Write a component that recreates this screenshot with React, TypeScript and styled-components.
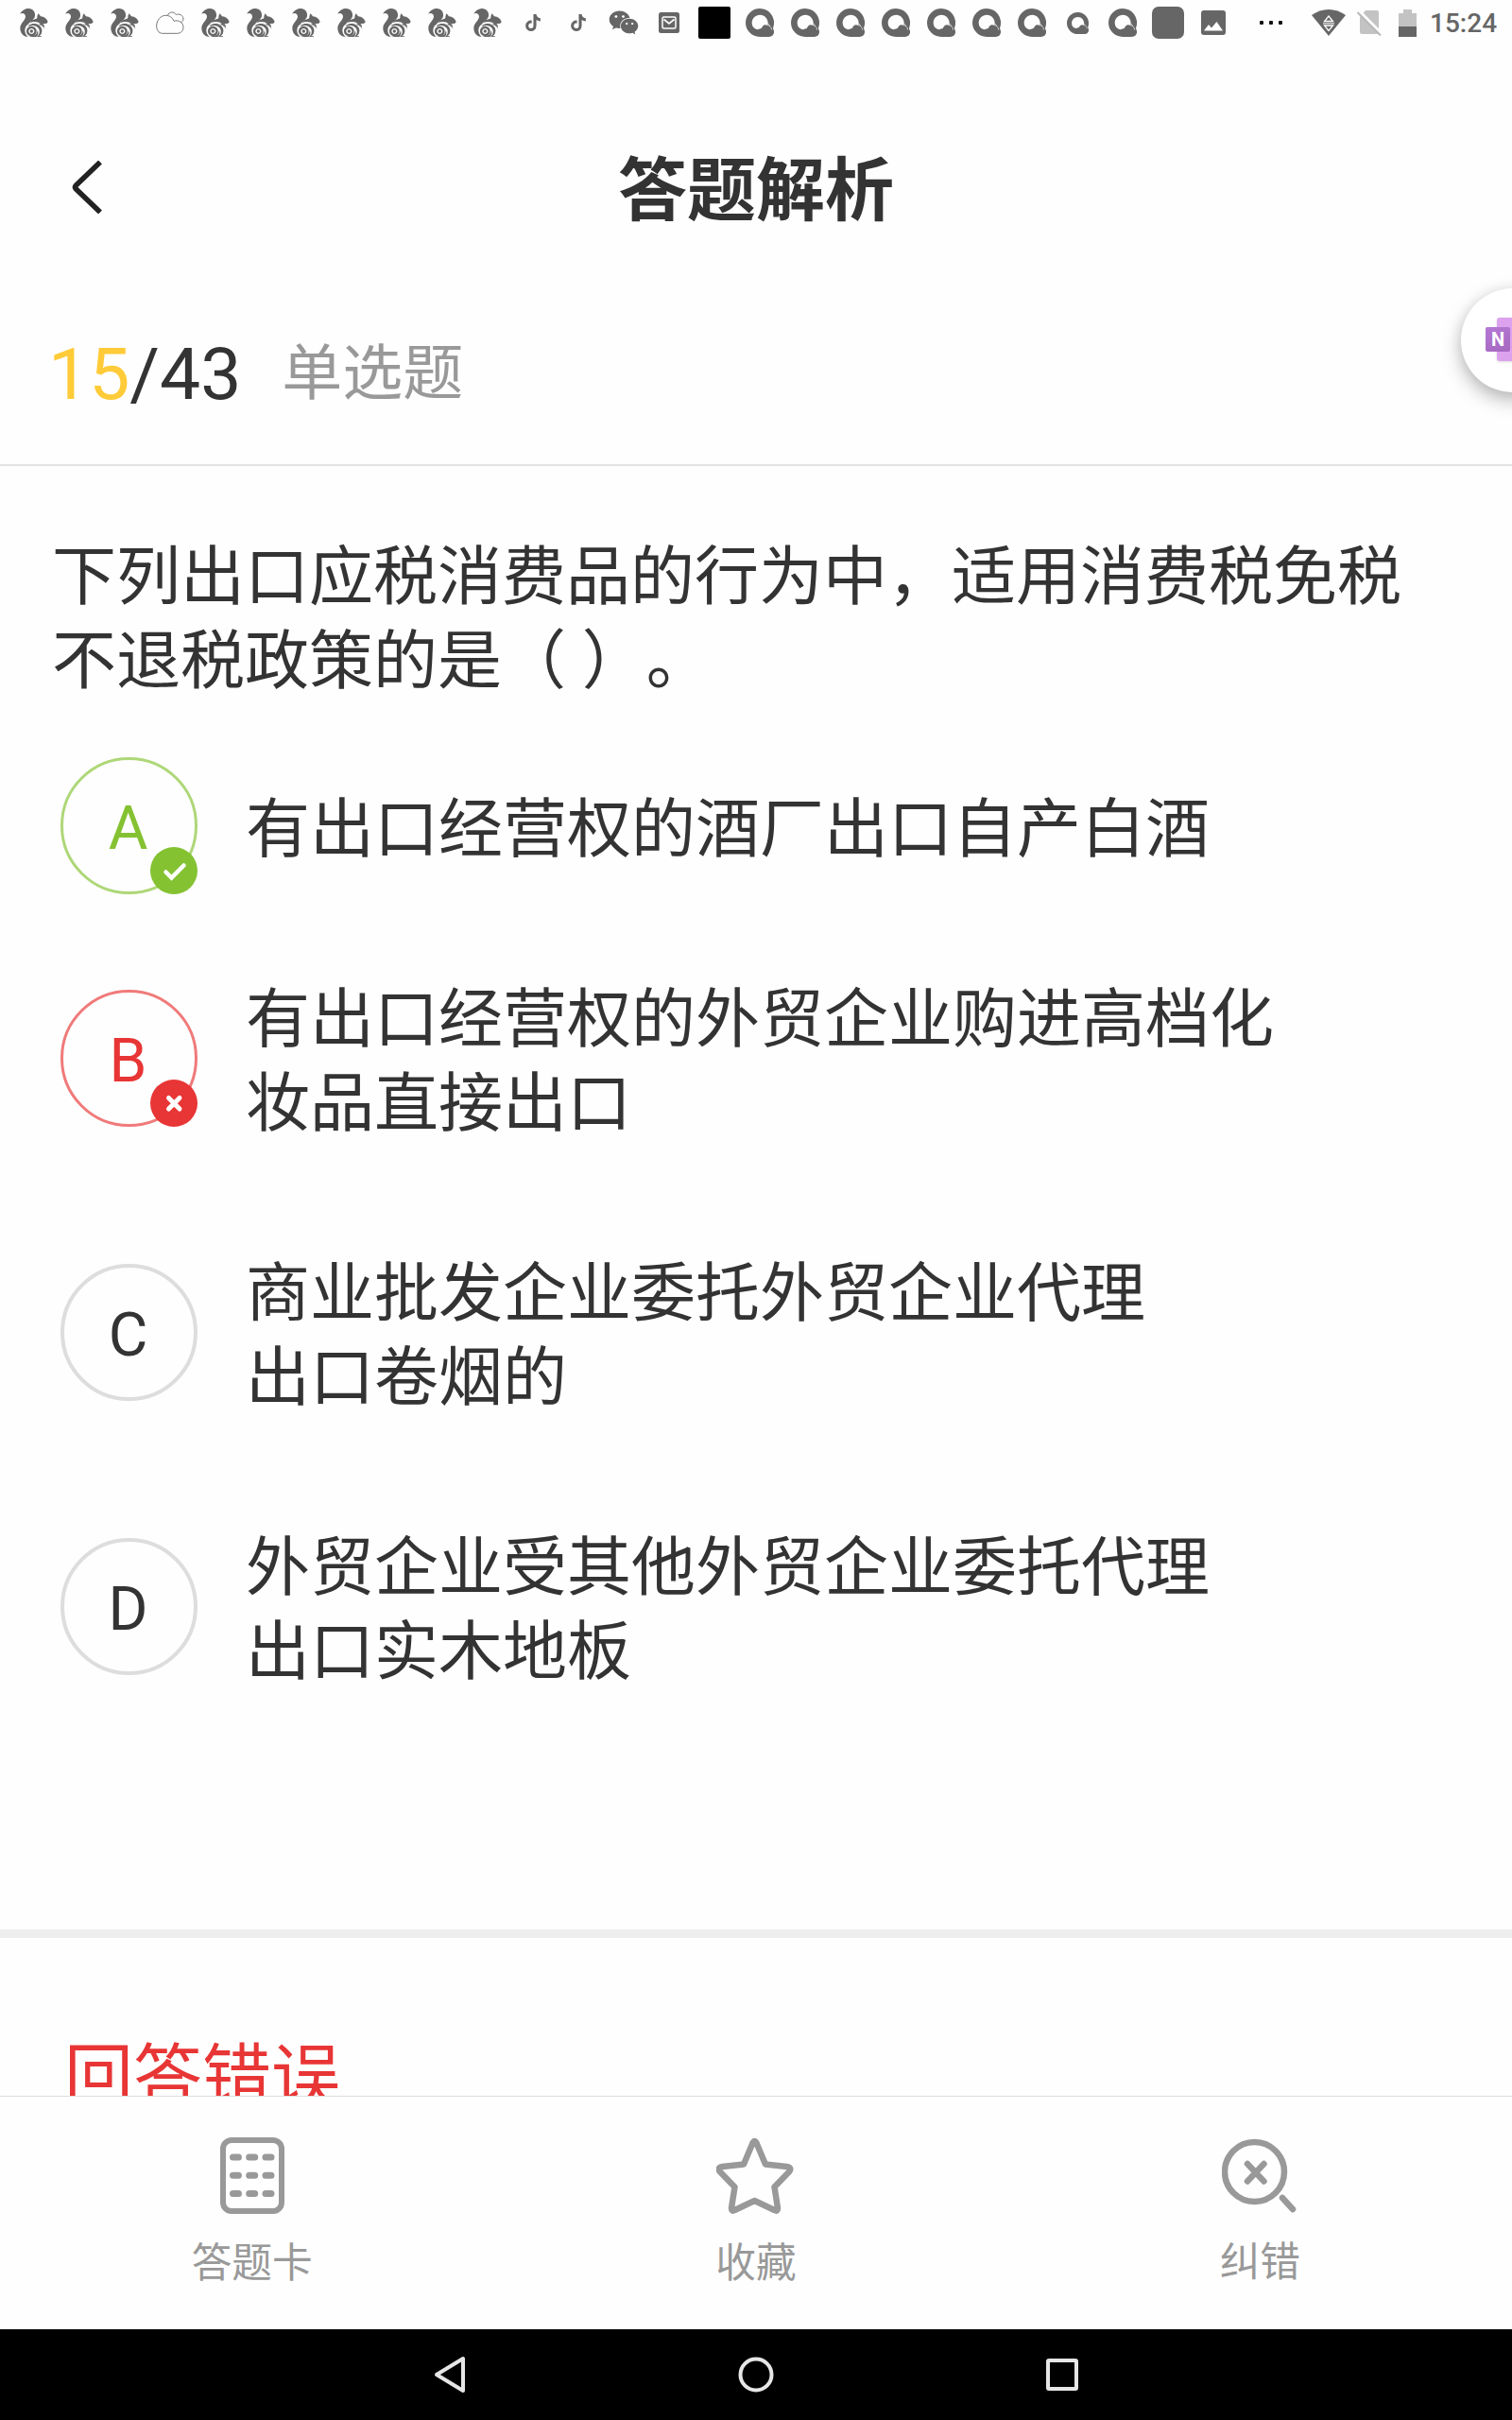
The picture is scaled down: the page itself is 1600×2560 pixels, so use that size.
import React from "react";
import styled, { createGlobalStyle } from "styled-components";
import { FaTiktok, FaWeixin } from "react-icons/fa";

const Global = createGlobalStyle`
  html, body { margin: 0; padding: 0; background: #fefefe; }
  * { box-sizing: border-box; }
`;

const Screen = styled.div`
  position: relative;
  display: flex;
  flex-direction: column;
  width: 1600px;
  height: 2560px;
  overflow: hidden;
  background: #fefefe;
  color: #333;
  font-family: Roboto, "Noto Sans CJK SC", sans-serif;
  text-spacing-trim: space-all;
`;

const StatusBar = styled.div`
  display: flex;
  align-items: center;
  flex: 0 0 48px;
  padding-left: 12px;
  color: #666;
`;

const Slot = styled.div`
  display: flex;
  align-items: center;
  justify-content: center;
  flex: 0 0 48px;
  height: 48px;
  svg { display: block; }
`;

const Tile = styled.div<{ $color: string; $radius: number }>`
  width: 34px;
  height: 34px;
  background: ${(p) => p.$color};
  border-radius: ${(p) => p.$radius}px;
`;

const Dots = styled.div`
  display: flex;
  gap: 6px;
  margin-left: 25px;
  span { width: 4px; height: 4px; border-radius: 1px; background: #111; }
`;

const SystemIcons = styled.div`
  display: flex;
  align-items: center;
  margin-left: 31px;
  svg { display: block; }
`;

const Clock = styled.span`
  margin-left: 14px;
  padding-top: 2px;
  font-size: 28px;
  font-weight: 500;
  line-height: 46px;
`;

const Header = styled.header`
  display: grid;
  grid-template-columns: 160px 1fr 160px;
  align-items: center;
  flex: 0 0 252px;
  padding-top: 48px;
`;

const BackButton = styled.button`
  border: 0;
  padding: 0 0 0 76px;
  background: none;
  svg { display: block; }
`;

const Title = styled.h1`
  margin: 0;
  padding-top: 7px;
  text-align: center;
  font-size: 73px;
  line-height: 90px;
  font-weight: 700;
`;

const Progress = styled.div`
  display: flex;
  flex: 0 0 193px;
  padding: 51px 0 0 51px;
  border-bottom: 2px solid #e3e3e3;
  font-size: 76.8px;
  line-height: 90px;
`;

const Current = styled.span`
  color: #ffcb38;
`;

const Kind = styled.span`
  margin-left: 43px;
  font-size: 64px;
  color: #999;
`;

const Content = styled.main`
  flex: 1;
  min-height: 0;
  overflow: hidden;
  display: flex;
  flex-direction: column;
`;

const Question = styled.p`
  margin: 74px 56px 28px 55px;
  font-size: 68px;
  line-height: 89px;
`;

const Options = styled.div`
  display: flex;
  flex-direction: column;
  padding-left: 64px;
`;

const OptionRow = styled.div`
  display: flex;
  align-items: center;
  gap: 51px;
`;

const tones = { right: "#84c232", wrong: "#e83535", idle: "#333" };
type Tone = keyof typeof tones;

const Letter = styled.div<{ $tone: Tone }>`
  position: relative;
  flex: 0 0 145px;
  height: 145px;
  border-radius: 50%;
  border: ${(p) => (p.$tone === "idle" ? "4px solid #ddd" : "3px solid " + tones[p.$tone] + "a8")};
  display: flex;
  align-items: center;
  justify-content: center;
  padding: 6px 2px 0 0;
  font-size: 64px;
  line-height: 75px;
  color: ${(p) => tones[p.$tone]};
`;

const Badge = styled.svg`
  position: absolute;
  right: -3px;
  bottom: -3px;
`;

const OptionText = styled.div`
  padding: 61px 0 51px;
  font-size: 68px;
  line-height: 89px;
  white-space: pre-line;
`;

const Divider = styled.div`
  flex: 0 0 9px;
  margin-top: 197px;
  background: #eee;
`;

const Verdict = styled.div`
  margin: 102px 0 0 68px;
  font-size: 73px;
  line-height: 90px;
  white-space: nowrap;
  color: #e83535;
`;

const TabBar = styled.nav`
  display: flex;
  flex: 0 0 247px;
  border-top: 1px solid #ddd;
`;

const Tab = styled.div<{ $gap?: number }>`
  flex: 1;
  display: flex;
  flex-direction: column;
  align-items: center;
  padding-top: 40px;
  color: #999;
  font-size: 42.67px;
  line-height: 60px;
  svg { display: block; margin-bottom: ${(p) => p.$gap ?? 22}px; }
`;

const NavBar = styled.div`
  display: flex;
  justify-content: center;
  align-items: center;
  gap: 284px;
  flex: 0 0 96px;
  background: #000;
`;

const Bubble = styled.div`
  position: absolute;
  left: 1546px;
  top: 305px;
  width: 110px;
  height: 110px;
  border-radius: 50%;
  background: #fff;
  box-shadow: 0 8px 20px rgba(0, 0, 0, 0.28), 0 0 14px rgba(0, 0, 0, 0.06);
`;

const Notebook = styled.div`
  position: absolute;
  left: 38px;
  top: 31px;
  width: 40px;
  height: 46px;
  border-radius: 3px;
  background: #dda2ee;
  box-shadow: 0 1px 3px rgba(0, 0, 0, 0.15);
`;

const NotebookTag = styled.div`
  position: absolute;
  left: -12px;
  top: 10px;
  width: 26px;
  height: 26px;
  border-radius: 2px;
  background: linear-gradient(160deg, #b579d5, #a568c0);
  color: #fff;
  font-size: 20px;
  font-weight: 700;
  line-height: 26px;
  text-align: center;
`;

const Squirrel = () => (
  <svg width="30" height="30" viewBox="0 0 90 90" fill="#666">
    <path d="M1 17C6 6 18 0 28 0C42 1 50 12 48 24C46 36 31 41 28 49C21 53 16 60 16 70C16 79 20 85 26 89H20C8 85 1 75 1 62C1 46 17 38 18 26C18 16 8 13 1 17Z" />
    <path d="M59 16L66 25C77 26 86 33 89 42C87 48 80 49 73 48C77 51 78 54 77 59C69 45 53 38 31 45C36 34 50 36 55 30C55 25 56 20 59 16Z" />
    <path d="M28 53C47 42 67 51 70 67C71 77 68 84 61 88H69V90H54C60 85 64 79 62 70C60 57 43 50 28 57Z" />
    <path d="M62 45C73 50 78 57 79 66C76 59 70 54 62 51Z" />
    <path fillRule="evenodd" d="M37 56A16 16 0 1 1 36.900 56ZM37 63A9 9 0 1 0 37.100 63Z" />
    <circle cx="37" cy="72" r="5" />
    <path d="M50 83C54 79 56 74 56 69C60 77 59 85 52 90H28Z" />
  </svg>
);

const CloudOutline = () => (
  <svg width="30" height="26" viewBox="0 0 90 78" fill="none" stroke="#777" strokeWidth="3">
    <path d="M20 73C8 72 2 62 2 48C3 31 14 17 30 16C44 16 53 23 57 34C72 29 86 38 87 53C87 65 80 72 68 73Z" />
    <path d="M37 16C42 4 57 2 64 14C73 9 87 15 87 27C87 33 84 36 79 37" />
  </svg>
);

const QIcon = ({ size = 30 }: { size?: number }) => (
  <svg width={size} height={size} viewBox="0 0 90 90">
    <path
      fill="#666"
      fillRule="evenodd"
      d="M45 0A45 45 0 0 1 88 59Q86 62 89 68C93 80 86 90 74 90H45A45 45 0 0 1 45 0ZM46 20C31 20 20 31 20 46C20 57 26 64 37 67C43 65 46 64 51 62C54 52 62 49 70 54C75 38 63 20 46 20Z"
    />
    <path d="M70 53C77 54 82 59 83 68M72 48L77 56" fill="none" stroke="#ddd" strokeWidth="2.500" />
  </svg>
);

const MailIcon = () => (
  <svg width="22" height="22" viewBox="0 0 22 22">
    <rect width="22" height="22" rx="2.500" fill="#666" />
    <rect x="4" y="5" width="14" height="12" rx="1.500" fill="none" stroke="#fff" strokeWidth="1.500" />
    <path d="M5.500 7.500L11 12L16.500 7.500" fill="none" stroke="#fff" strokeWidth="1.700" />
  </svg>
);

const PhotoIcon = () => (
  <svg width="26" height="26" viewBox="0 0 26 26">
    <rect width="26" height="26" rx="3" fill="#666" />
    <path d="M3 21.500L8 15L11 18.500L16.500 12L23 21.500Z" fill="#fff" />
  </svg>
);

const WifiIcon = () => (
  <svg width="36" height="28" viewBox="0 0 36 28">
    <path d="M0 6C11-2 25-2 36 6L18 28Z" fill="#666" />
    <path d="M18 7L22.500 12.500H13.500ZM18 22.500L13.500 17H22.500Z" fill="none" stroke="#fff" strokeWidth="1.300" />
    <path d="M12 14.800H24" stroke="#fff" strokeWidth="1" />
  </svg>
);

const NoSimIcon = styled(({ className }: { className?: string }) => (
  <svg className={className} width="26" height="28" viewBox="0 0 26 28">
    <path d="M9 1H21Q23 1 23 3V24Q23 26 21 26H5Q3 26 3 24V8Z" fill="#c3c3c3" />
    <path d="M1 1L26 26" stroke="#fefefe" strokeWidth="4" />
    <path d="M.500 3L25 27.500" stroke="#b8b8b8" strokeWidth="2" />
  </svg>
))`
  margin-left: 12px;
`;

const BatteryIcon = styled(({ className }: { className?: string }) => (
  <svg className={className} width="19" height="29" viewBox="0 0 19 29">
    <path d="M0 4H5V0H14V4H19V19H0Z" fill="#c3c3c3" />
    <path d="M0 18H19V29H0Z" fill="#666" />
  </svg>
))`
  margin-left: 18px;
`;

const CardIcon = () => (
  <svg width="68" height="84" viewBox="0 0 68 84" fill="none" stroke="#999">
    <rect x="3" y="6" width="62" height="75" rx="9" strokeWidth="6" />
    {[24, 43.3, 62.6].map((y) => (
      <path key={y} d={`M13.500 ${y}h6M30.700 ${y}h6M48 ${y}h6`} strokeWidth="7" strokeLinecap="round" />
    ))}
  </svg>
);

const StarIcon = () => (
  <svg width="84" height="84" viewBox="1.500 0 84 84" fill="none" stroke="#999" strokeWidth="6.500" strokeLinejoin="round">
    <path d="M40 9Q42 5 44 9L53.500 31.500L76 34Q82 35 78.500 39.500L63 55.500L66.500 78Q66.500 82 63 80L42 70L21 80Q17.500 82 17.500 78L21 55.500L5.500 39.500Q2 35 8 34L30.500 31.500Z" />
  </svg>
);

const ReportIcon = () => (
  <svg width="80" height="84" viewBox="0 0 80 84" fill="none" stroke="#999" strokeWidth="6.500" strokeLinecap="round">
    <circle cx="34.500" cy="39.500" r="31.500" />
    <path d="M27 31L44.500 49.500M44.500 31L27 49.500M64 67L75 79" />
  </svg>
);

type Status = "squirrel" | "cloud" | "note" | "wechat" | "mail" | "black" | "q" | "smallq" | "grey" | "photo";

const statusItems: Status[] = [
  "squirrel", "squirrel", "squirrel", "cloud",
  "squirrel", "squirrel", "squirrel", "squirrel", "squirrel", "squirrel", "squirrel",
  "note", "note", "wechat", "mail", "black",
  "q", "q", "q", "q", "q", "q", "q", "smallq", "q", "grey", "photo",
];

const statusArt: Record<Status, React.ReactNode> = {
  squirrel: <Squirrel />,
  cloud: <CloudOutline />,
  note: <FaTiktok size={18} />,
  wechat: <FaWeixin size={32} />,
  mail: <MailIcon />,
  black: <Tile $color="#000" $radius={2} />,
  q: <QIcon />,
  smallq: <QIcon size={23} />,
  grey: <Tile $color="#666" $radius={7} />,
  photo: <PhotoIcon />,
};

const options: { letter: string; tone: Tone; text: string }[] = [
  { letter: "A", tone: "right", text: "有出口经营权的酒厂出口自产白酒" },
  { letter: "B", tone: "wrong", text: "有出口经营权的外贸企业购进高档化\n妆品直接出口" },
  { letter: "C", tone: "idle", text: "商业批发企业委托外贸企业代理\n出口卷烟的" },
  { letter: "D", tone: "idle", text: "外贸企业受其他外贸企业委托代理\n出口实木地板" },
];

export default function App() {
  return (
    <Screen>
      <Global />
      <StatusBar>
        {statusItems.map((name, i) => (
          <Slot key={i}>{statusArt[name]}</Slot>
        ))}
        <Dots><span /><span /><span /></Dots>
        <SystemIcons>
          <WifiIcon />
          <NoSimIcon />
          <BatteryIcon />
        </SystemIcons>
        <Clock>15:24</Clock>
      </StatusBar>

      <Header>
        <BackButton aria-label="返回">
          <svg width="32" height="56" viewBox="0 0 32 56" fill="none" stroke="#222" strokeWidth="5.500">
            <path d="M30 1.500L4.500 26Q2.500 28 4.500 30L30 54.500" />
          </svg>
        </BackButton>
        <Title>答题解析</Title>
      </Header>

      <Progress>
        <Current>15</Current>/43
        <Kind>单选题</Kind>
      </Progress>

      <Content>
        <Question>
          下列出口应税消费品的行为中，适用消费税免税
          <br />
          不退税政策的是（ ）。
        </Question>
        <Options>
          {options.map((o) => (
            <OptionRow key={o.letter}>
              <Letter $tone={o.tone}>
                {o.letter}
                {o.tone !== "idle" && (
                  <Badge width="50" height="50" viewBox="0 0 50 50" fill="none" stroke="#fff">
                    <circle cx="25" cy="25" r="25" fill={tones[o.tone]} stroke="none" />
                    {o.tone === "right" ? (
                      <path d="M16.500 26.500L22.500 32.500L35.500 19.500" strokeWidth="4.500" strokeLinecap="round" />
                    ) : (
                      <path d="M19.500 19.500L31 31M31 19.500L19.500 31" strokeWidth="5" strokeLinecap="round" />
                    )}
                  </Badge>
                )}
              </Letter>
              <OptionText>{o.text}</OptionText>
            </OptionRow>
          ))}
        </Options>
        <Divider />
        <Verdict>回答错误</Verdict>
      </Content>

      <TabBar>
        <Tab><CardIcon />答题卡</Tab>
        <Tab><StarIcon />收藏</Tab>
        <Tab $gap={21}><ReportIcon />纠错</Tab>
      </TabBar>

      <NavBar>
        <svg width="40" height="40" viewBox="0 0 40 40" fill="none" stroke="#e6e6e6" strokeWidth="4" strokeLinejoin="round">
          <path d="M34 3V37L6 20Z" />
        </svg>
        <svg width="40" height="40" viewBox="0 0 40 40" fill="none" stroke="#e6e6e6" strokeWidth="4">
          <circle cx="20" cy="20" r="16.500" />
        </svg>
        <svg width="40" height="40" viewBox="0 0 40 40" fill="none" stroke="#e6e6e6" strokeWidth="4">
          <rect x="5" y="5" width="30" height="30" rx="1" />
        </svg>
      </NavBar>

      <Bubble>
        <Notebook>
          <NotebookTag>N</NotebookTag>
        </Notebook>
      </Bubble>
    </Screen>
  );
}
